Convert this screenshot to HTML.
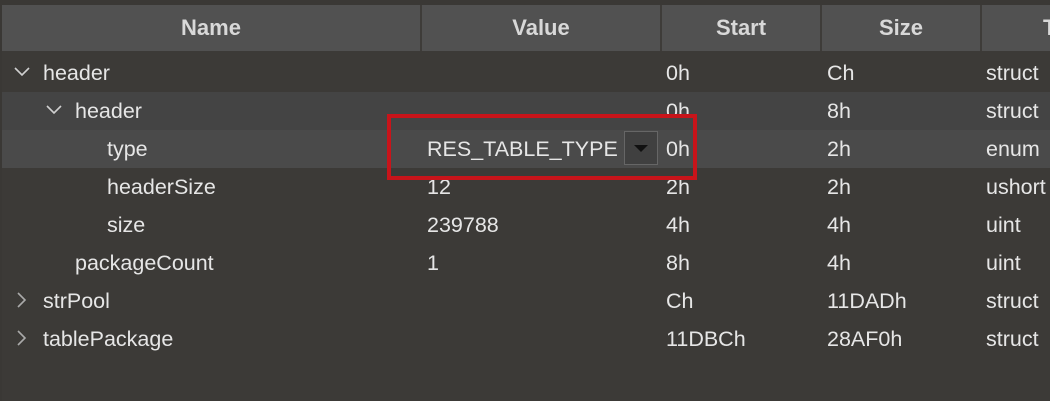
<!DOCTYPE html><html><head><style>
body{margin:0;width:1050px;height:401px;background:#3c3a37;position:relative;overflow:hidden;font-family:"Liberation Sans",sans-serif;}
.top{position:absolute;left:0;top:0;width:1050px;height:5px;background:#3a3835}
.hdbar{position:absolute;left:2px;top:5px;width:1048px;height:46px;background:#515151}
.sep{position:absolute;top:5px;width:2px;height:46px;background:#3e3c39}
.hl{position:absolute;top:5px;color:#d8d8d8;font-weight:bold;font-size:22px;line-height:46px;text-align:center}
.row{position:absolute;left:2px;width:1048px;height:38px}
.t{position:absolute;font-size:21.5px;color:#e6e6e6;line-height:38px;white-space:nowrap}
</style></head><body>
<div class="top"></div>
<div class="hdbar"></div>
<div class="sep" style="left:420px"></div>
<div class="sep" style="left:660px"></div>
<div class="sep" style="left:820px"></div>
<div class="sep" style="left:980px"></div>
<div class="hl" style="left:2px;width:418px">Name</div>
<div class="hl" style="left:422px;width:238px">Value</div>
<div class="hl" style="left:662px;width:158px">Start</div>
<div class="hl" style="left:822px;width:158px">Size</div>
<div class="hl" style="left:1043px;width:20px;text-align:left">T</div>
<div class="row" style="top:92px;background:#444"></div>
<div class="row" style="top:130px;background:#4a4a4a"></div>
<svg style="position:absolute;left:14px;top:66px" width="16" height="12"><path d="M1 2l7 7 7-7" fill="none" stroke="#d0d0d0" stroke-width="1.6"/></svg>
<svg style="position:absolute;left:46px;top:104px" width="16" height="12"><path d="M1 2l7 7 7-7" fill="none" stroke="#d0d0d0" stroke-width="1.6"/></svg>
<svg style="position:absolute;left:16px;top:292px" width="12" height="16"><path d="M2 1l7 7-7 7" fill="none" stroke="#aaa" stroke-width="1.6"/></svg>
<svg style="position:absolute;left:16px;top:330px" width="12" height="16"><path d="M2 1l7 7-7 7" fill="none" stroke="#aaa" stroke-width="1.6"/></svg>
<div class="t" style="left:43px;top:54px">header</div>
<div class="t" style="left:75px;top:92px">header</div>
<div class="t" style="left:107px;top:130px">type</div>
<div class="t" style="left:107px;top:168px">headerSize</div>
<div class="t" style="left:107px;top:206px">size</div>
<div class="t" style="left:75px;top:244px">packageCount</div>
<div class="t" style="left:43px;top:282px">strPool</div>
<div class="t" style="left:43px;top:320px">tablePackage</div>
<div class="t" style="left:427px;top:130px">RES_TABLE_TYPE</div>
<div class="t" style="left:427px;top:168px">12</div>
<div class="t" style="left:427px;top:206px">239788</div>
<div class="t" style="left:427px;top:244px">1</div>
<div class="t" style="left:666px;top:54px">0h</div><div class="t" style="left:827px;top:54px">Ch</div><div class="t" style="left:986px;top:54px">struct</div>
<div class="t" style="left:666px;top:92px">0h</div><div class="t" style="left:827px;top:92px">8h</div><div class="t" style="left:986px;top:92px">struct</div>
<div class="t" style="left:666px;top:130px">0h</div><div class="t" style="left:827px;top:130px">2h</div><div class="t" style="left:986px;top:130px">enum</div>
<div class="t" style="left:666px;top:168px">2h</div><div class="t" style="left:827px;top:168px">2h</div><div class="t" style="left:986px;top:168px">ushort</div>
<div class="t" style="left:666px;top:206px">4h</div><div class="t" style="left:827px;top:206px">4h</div><div class="t" style="left:986px;top:206px">uint</div>
<div class="t" style="left:666px;top:244px">8h</div><div class="t" style="left:827px;top:244px">4h</div><div class="t" style="left:986px;top:244px">uint</div>
<div class="t" style="left:666px;top:282px">Ch</div><div class="t" style="left:827px;top:282px">11DADh</div><div class="t" style="left:986px;top:282px">struct</div>
<div class="t" style="left:666px;top:320px">11DBCh</div><div class="t" style="left:827px;top:320px">28AF0h</div><div class="t" style="left:986px;top:320px">struct</div>
<div style="position:absolute;left:624px;top:131px;width:34px;height:34px;border:1px solid #666;background:#404040;box-sizing:border-box"></div>
<svg style="position:absolute;left:634px;top:145px" width="14" height="8"><path d="M0 0h14L7 7z" fill="#111"/></svg>
<div style="position:absolute;left:387px;top:114px;width:310px;height:66px;border:4px solid #c8141a;box-sizing:border-box"></div>
<div style="position:absolute;left:0;top:0;width:2px;height:401px;background:#3a3835"></div>
</body></html>
